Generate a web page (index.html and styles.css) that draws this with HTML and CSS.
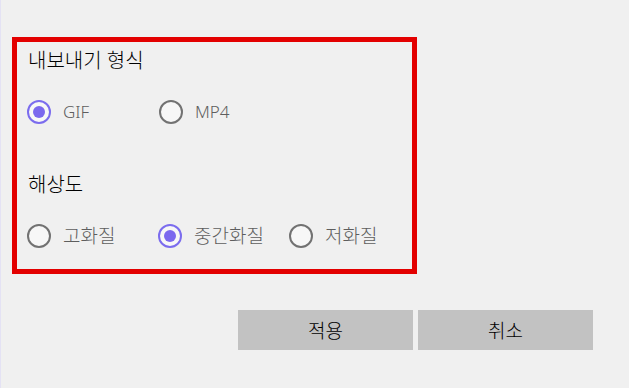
FILE: index.html
```html
<!DOCTYPE html>
<html lang="ko">
<head>
<meta charset="utf-8">
<link rel="stylesheet" href="styles.css">
</head>
<body>
<div class="dialog">
  <div class="panel">
    <div class="heading">내보내기 형식</div>
    <div class="options first">
      <label class="option"><span class="radio checked"></span><span class="label latin">GIF</span></label>
      <label class="option"><span class="radio"></span><span class="label latin">MP4</span></label>
    </div>
    <div class="heading second">해상도</div>
    <div class="options">
      <label class="option"><span class="radio"></span><span class="label">고화질</span></label>
      <label class="option"><span class="radio checked"></span><span class="label">중간화질</span></label>
      <label class="option"><span class="radio"></span><span class="label">저화질</span></label>
    </div>
  </div>
  <div class="actions">
    <button class="btn">적용</button>
    <button class="btn">취소</button>
  </div>
</div>
</body>
</html>
```
FILE: styles.css
```css
html, body {
  margin: 0;
  padding: 0;
  background: #f0f0f0;
  font-family: "Noto Sans", "Noto Sans CJK KR", sans-serif;
}
.dialog {
  width: 629px;
  height: 388px;
  box-sizing: border-box;
  padding-top: 37px;
  border-left: 1px solid #e4e2f4;
}
.panel {
  margin-left: 11px;
  width: 405px;
  height: 237px;
  box-sizing: border-box;
  border: 5px solid #e30000;
  padding: 7px 0 0 11px;
  display: flex;
  flex-direction: column;
}
.heading {
  font-size: 20px;
  font-weight: 300;
  line-height: 24px;
  height: 24px;
  color: #000;
}
.heading.second {
  margin-top: 49px;
}
.options {
  display: grid;
  grid-template-columns: 131px 131px 131px;
  margin-top: 27px;
  margin-left: -1px;
}
.options.first {
  grid-template-columns: 132px 131px;
}
.option {
  display: flex;
  align-items: center;
  gap: 12px;
  height: 24px;
}
.radio {
  width: 24px;
  height: 24px;
  box-sizing: border-box;
  border-radius: 50%;
  border: 2px solid #727272;
  background: #f7f7f7;
  display: flex;
  align-items: center;
  justify-content: center;
  flex: none;
}
.radio.checked {
  border-color: #7b6cee;
  background: #f7f7f7;
}
.radio.checked::after {
  content: "";
  width: 12px;
  height: 12px;
  border-radius: 50%;
  background: #7b68ee;
}
.label {
  font-size: 19px;
  font-weight: 300;
  line-height: 24px;
  color: #5e5e5e;
}
.label.latin {
  font-size: 17px;
}
.actions {
  display: flex;
  gap: 5px;
  margin-top: 36px;
  padding-left: 237px;
}
.btn {
  width: 175px;
  height: 40px;
  border: none;
  background: #c2c2c2;
  font-family: "Noto Sans", "Noto Sans CJK KR", sans-serif;
  font-size: 19px;
  font-weight: 300;
  color: #000;
  padding: 0;
}
```
